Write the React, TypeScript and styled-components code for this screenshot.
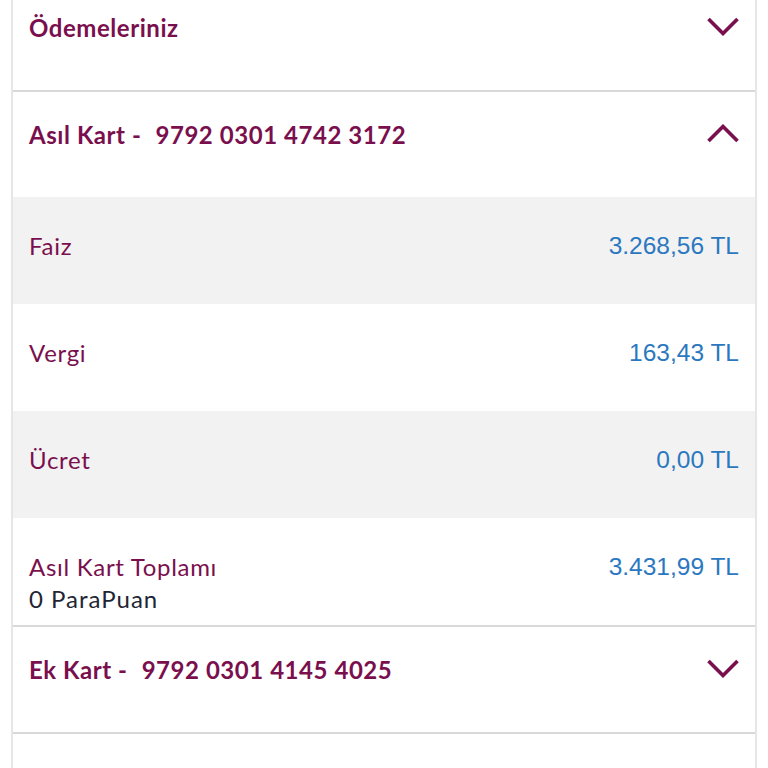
import React, { FC } from "react";
import styled, { createGlobalStyle } from "styled-components";

//******** DATA ********//

interface IRow {
  label: string;
  sub?: string;
  value: string;
}

const rows: IRow[] = [
  { label: "Faiz", value: "3.268,56 TL" },
  { label: "Vergi", value: "163,43 TL" },
  { label: "Ücret", value: "0,00 TL" },
  { label: "Asıl Kart Toplamı", sub: "0 ParaPuan", value: "3.431,99 TL" },
];

//******** COMPONENTS ********//

const Chevron: FC<{ up?: boolean }> = ({ up }) => (
  <SChevron width="32" height="19" viewBox="0 0 32 19">
    <polyline
      points={up ? "1.5,17 16,2.5 30.5,17" : "1.5,2 16,16.5 30.5,2"}
      fill="none"
      stroke="#7a0f4e"
      strokeWidth="3.6"
    />
  </SChevron>
);

interface HeaderProps {
  title: string;
  number?: string;
  open?: boolean;
}

const Header: FC<HeaderProps> = ({ title, number, open }) => (
  <SHeader>
    <STitle>
      {title}
      {number && <SNumber>{number}</SNumber>}
    </STitle>
    <Chevron up={open} />
  </SHeader>
);

export default function App() {
  return (
    <>
      <GlobalStyle />
      <SCard>
        <Header title="Ödemeleriniz" />
        <SSection>
          <Header title="Asıl Kart -" number="9792 0301 4742 3172" open />
          {rows.map((row, i) => (
            <SRow key={row.label} $shaded={i % 2 === 0}>
              <SLabelBox>
                <SLabel>{row.label}</SLabel>
                {row.sub && <SSub>{row.sub}</SSub>}
              </SLabelBox>
              <SValue>{row.value}</SValue>
            </SRow>
          ))}
        </SSection>
        <SSection>
          <Header title="Ek Kart -" number="9792 0301 4145 4025" />
        </SSection>
        <SSection>
          <SEmpty />
        </SSection>
      </SCard>
    </>
  );
}

//******** STYLES ********//

const GlobalStyle = createGlobalStyle`
  html, body {
    margin: 0;
    padding: 0;
    background: #ffffff;
    overflow: hidden;
  }
  body {
    font-family: Lato, "Noto Sans", sans-serif;
  }
`;

const SCard = styled.div`
  margin: -15px 11px 0;
  border-left: 2px solid #e6e6ea;
  border-right: 2px solid #e6e6ea;
  background: #ffffff;
`;

const SSection = styled.div`
  border-top: 2px solid #d9d9d9;
`;

const SHeader = styled.div`
  box-sizing: border-box;
  height: 105px;
  padding: 28px 16px 0;
  display: flex;
  justify-content: space-between;
  align-items: flex-start;
`;

const STitle = styled.span`
  font-size: 24px;
  line-height: 30px;
  font-weight: 700;
  color: #7a0f4e;
  letter-spacing: 0.55px;
`;

const SNumber = styled.span`
  margin-left: 14px;
`;

const SChevron = styled.svg`
  display: block;
  margin-top: 4px;
`;

const SRow = styled.div<{ $shaded: boolean }>`
  box-sizing: border-box;
  min-height: 107px;
  padding: 34px 16px 10px;
  display: flex;
  justify-content: space-between;
  align-items: flex-start;
  background: ${({ $shaded }) => ($shaded ? "#f2f2f2" : "#ffffff")};
`;

const SLabelBox = styled.div`
  display: flex;
  flex-direction: column;
  gap: 2px;
`;

const SLabel = styled.span`
  font-size: 24px;
  line-height: 30px;
  color: #7a0f4e;
  letter-spacing: 0.7px;
`;

const SSub = styled.span`
  font-size: 24px;
  line-height: 30px;
  color: #1e2635;
  letter-spacing: 1px;
`;

const SValue = styled.span`
  font-family: "Liberation Sans", Arial, sans-serif;
  font-size: 24.5px;
  line-height: 30px;
  color: #2b78c0;
`;

const SEmpty = styled.div`
  height: 60px;
`;
